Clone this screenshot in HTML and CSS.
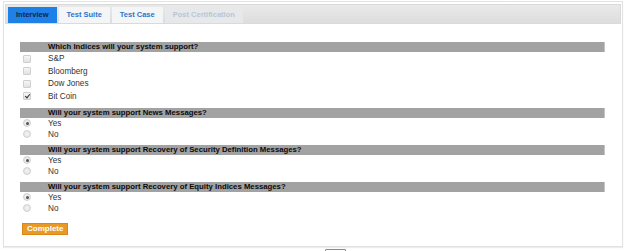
FILE: index.html
```html
<!DOCTYPE html>
<html>
<head>
<meta charset="utf-8">
<link rel="stylesheet" href="styles.css">
</head>
<body>
<div class="panel">
  <div class="tabbar">
    <div class="tab active">Interview</div>
    <div class="tab">Test Suite</div>
    <div class="tab">Test Case</div>
    <div class="tab disabled">Post Certification</div>
  </div>
  <div class="form">
    <div class="section">
      <div class="qhead">Which Indices will your system support?</div>
      <div class="opts checks">
        <div class="opt"><span class="cb"></span><span class="lbl">S&amp;P</span></div>
        <div class="opt"><span class="cb"></span><span class="lbl">Bloomberg</span></div>
        <div class="opt"><span class="cb"></span><span class="lbl">Dow Jones</span></div>
        <div class="opt"><span class="cb on"></span><span class="lbl">Bit Coin</span></div>
      </div>
    </div>
    <div class="section">
      <div class="qhead">Will your system support News Messages?</div>
      <div class="opts radios">
        <div class="opt"><span class="rb on"></span><span class="lbl">Yes</span></div>
        <div class="opt"><span class="rb"></span><span class="lbl">No</span></div>
      </div>
    </div>
    <div class="section">
      <div class="qhead">Will your system support Recovery of Security Definition Messages?</div>
      <div class="opts radios">
        <div class="opt"><span class="rb on"></span><span class="lbl">Yes</span></div>
        <div class="opt"><span class="rb"></span><span class="lbl">No</span></div>
      </div>
    </div>
    <div class="section">
      <div class="qhead">Will your system support Recovery of Equity Indices Messages?</div>
      <div class="opts radios">
        <div class="opt"><span class="rb on"></span><span class="lbl">Yes</span></div>
        <div class="opt"><span class="rb"></span><span class="lbl">No</span></div>
      </div>
    </div>
    <button class="complete">Complete</button>
  </div>
</div>
<div class="pager"></div>
</body>
</html>
```
FILE: styles.css
```css
html, body {
  margin: 0;
  padding: 0;
  background: #ffffff;
  overflow: hidden;
  height: 251px;
}
body {
  font-family: "Liberation Sans", Arial, sans-serif;
  color: #222;
}
.panel {
  margin: 1px 0 0 3px;
  width: 616px;
  height: 243px;
  border: 1px solid #e2e2e2;
  box-shadow: 0 1px 1px #ececec;
  padding: 1px 1px 0 1px;
}
.tabbar {
  margin-top: 1px;
  height: 20px;
  background: linear-gradient(#e9e9e9, #dddddd);
  border: 1px solid #dadada;
  box-sizing: border-box;
  display: flex;
  align-items: flex-end;
  padding-left: 2px;
  gap: 2px;
}
.tab {
  height: 16px;
  line-height: 16px;
  padding: 0 8px;
  font-size: 7.5px;
  font-weight: bold;
  color: #2e74c8;
  background: #f3f5f7;
}
.tab.active {
  background: #1f80e6;
  color: #0b2550;
}
.tab.disabled {
  background: #e6e8ea;
  color: #b9c6d6;
}
.form {
  padding: 18px 16px 0 15px;
}
.section {
  margin-bottom: 5px;
}
.qhead {
  height: 10px;
  line-height: 10px;
  background: #a2a2a2;
  border-right: 1px solid #c4c4c4;
  padding-left: 28px;
  font-size: 7.75px;
  font-weight: bold;
  color: #0a0a0a;
}
.checks {
  padding-top: 0.5px;
}
.checks .opt {
  height: 12.5px;
}
.radios .opt {
  height: 11px;
}
.opt {
  display: flex;
  align-items: center;
  padding-left: 3px;
}
.lbl {
  margin-left: 17px;
  font-size: 8.2px;
  color: #333;
}
.cb {
  width: 6px;
  height: 6px;
  border: 1px solid #cfcfcf;
  border-radius: 1px;
  background: linear-gradient(#f6f6f6, #e2e2e2);
  position: relative;
}
.cb.on::after {
  content: "";
  position: absolute;
  left: 2px;
  top: 0px;
  width: 2px;
  height: 4px;
  border-right: 1.3px solid #333;
  border-bottom: 1.3px solid #333;
  transform: rotate(40deg);
}
.rb {
  width: 6px;
  height: 6px;
  border: 1px solid #d0d0d0;
  border-radius: 50%;
  background: radial-gradient(circle, #f4f4f4, #e0e0e0);
  position: relative;
}
.rb.on::after {
  content: "";
  position: absolute;
  left: 1.5px;
  top: 1.5px;
  width: 3px;
  height: 3px;
  border-radius: 50%;
  background: #555;
}
.complete {
  display: block;
  margin: 9px 0 0 2px;
  height: 12px;
  padding: 0 4px;
  border: 1px solid #d9861a;
  background: #e99a24;
  color: #ffffff;
  font-family: "Liberation Sans", Arial, sans-serif;
  font-size: 8px;
  font-weight: bold;
  line-height: 10px;
  border-radius: 0;
}
.pager {
  margin: 2px 0 0 325px;
  width: 19px;
  height: 12px;
  border: 1px solid #8a8a8a;
  border-radius: 1px;
}
```
